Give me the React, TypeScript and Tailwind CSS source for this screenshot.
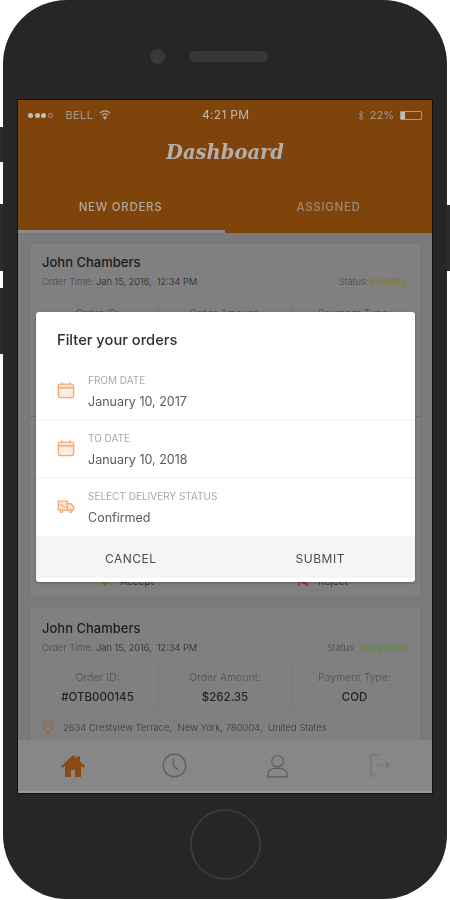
import React from "react";

const font = "[font-family:Inter,'Liberation_Sans',sans-serif]";

function Cal() {
  return (
    <svg width="18" height="18" viewBox="0 0 20 20" fill="none" stroke="#f5ab75" strokeWidth="1.500">
      <rect x="1.500" y="3.500" width="17" height="15" rx="2" fill="#fde6d3" />
      <path d="M1.500 7.500h17M5.500 1.500v3M14.500 1.500v3" />
      <path d="M5 10.500h10M5 13h10M5 15.500h10" stroke="#fff" strokeWidth="1.200" strokeDasharray="2 1.200" />
    </svg>
  );
}

function Truck() {
  return (
    <svg width="18" height="15" viewBox="0 0 20 16" fill="none" stroke="#f5ab75" strokeWidth="1.600">
      <path d="M1.500 2h10v10h-10z" fill="#fde6d3" />
      <path d="M11.500 5h4l3 3.500V12h-7z" fill="#fde6d3" />
      <circle cx="5" cy="13" r="1.600" fill="#fff" />
      <circle cx="15" cy="13" r="1.600" fill="#fff" />
      <path d="M3 5l6 4" />
    </svg>
  );
}

function Stat({ label, value, className }: { label: string; value?: string; className: string }) {
  return (
    <div className={`flex flex-col items-center gap-[6px] pt-2 pb-[6px] ${className}`}>
      <span className="text-[10.500px] leading-[13px] font-light text-[#505050]">{label}</span>
      {value && <span className="text-[11.500px] leading-[14px] font-medium text-[#222]">{value}</span>}
    </div>
  );
}

function CardHead({ status, color }: { status: string; color: string }) {
  return (
    <>
      <div className="text-[13px] leading-[16px] font-medium text-[#1c1c1c]">John Chambers</div>
      <div className="mt-[6px] flex items-center justify-between text-[9.300px] leading-[12px]">
        <span className="font-light text-[#484848]">
          Order Time: <span className="text-[#252525]">Jan 15, 2016,&nbsp; 12:34 PM</span>
        </span>
        <span className="font-light text-[#484848]">
          Status: <span className="font-normal" style={{ color }}>{status}</span>
        </span>
      </div>
    </>
  );
}

function Field({ icon, label, value, last }: { icon: React.ReactNode; label: string; value: string; last?: boolean }) {
  return (
    <div className={`flex items-center gap-[13px] pl-[21px] ${last ? "h-[57px]" : "h-[58px] border-b-2 border-[#f7f7f7]"}`}>
      <div className="-mt-[3px] flex w-[18px] justify-center">{icon}</div>
      <div className="flex flex-col gap-[9px]">
        <span className="text-[10px] leading-[12px] text-[#a8a8a8]">{label}</span>
        <span className="text-[12.500px] leading-[14px] text-[#5a5a5a]">{value}</span>
      </div>
    </div>
  );
}

export default function App() {
  return (
    <div className={`relative h-[900px] w-[450px] overflow-hidden bg-white ${font}`}>
      <div className="h-full w-full blur-[0.5px]">
        {/* side buttons */}
        <div className="absolute top-[127px] left-0 h-[35px] w-[4px] bg-[#2b2b2b]" />
        <div className="absolute top-[204px] left-0 h-[67px] w-[4px] bg-[#2b2b2b]" />
        <div className="absolute top-[288px] left-0 h-[66px] w-[4px] bg-[#2b2b2b]" />
        <div className="absolute top-[205px] right-0 h-[66px] w-[4px] bg-[#2b2b2b]" />

        <div className="relative mx-[3px] flex h-[899px] w-[444px] flex-col items-center rounded-[64px] bg-[#262626]">
          {/* top bezel */}
          <div className="flex h-[100px] shrink-0 items-center gap-[24px] pt-[12px] pr-[32px]">
            <div className="h-[15px] w-[15px] rounded-full bg-[#383838]" />
            <div className="h-[11px] w-[79px] rounded-full bg-[#383838]" />
          </div>

          {/* screen */}
          <div className="relative flex h-[693px] w-[414px] shrink-0 flex-col overflow-hidden bg-[#7a7a7a] shadow-[0_0_0_1px_#111]">
            <div className="flex h-[133px] shrink-0 flex-col bg-[#7f430c]">
              <div className="flex h-[30px] shrink-0 items-center justify-between px-[10px] text-[11px] text-[#a39a90]">
                <div className="flex items-center gap-[13px]">
                  <div className="flex items-center gap-[1.500px]">
                    <i className="h-[5px] w-[5px] rounded-full bg-[#c4bdb6]" />
                    <i className="h-[5px] w-[5px] rounded-full bg-[#c4bdb6]" />
                    <i className="h-[5px] w-[5px] rounded-full bg-[#c4bdb6]" />
                    <i className="h-[5px] w-[5px] rounded-full border border-[#a39a90]" />
                  </div>
                  <div className="flex items-center gap-[6px]">
                    <span className="tracking-[0.400px]">BELL</span>
                    <svg width="12" height="10" viewBox="0 0 12 10" fill="none" stroke="#b5aca3" strokeWidth="1.200">
                      <path d="M1 3c3-2.600 7-2.600 10 0M3 5.200c1.800-1.500 4.200-1.500 6 0M6 9 4.700 7.300c.8-.6 1.800-.6 2.600 0z" />
                    </svg>
                  </div>
                </div>
                <span className="absolute left-[184px] text-[12px] tracking-[0.300px] text-[#c0b8b0]">4:21 PM</span>
                <div className="flex items-center gap-[6px]">
                  <svg width="6" height="11" viewBox="0 0 6 11" fill="none" stroke="#9c8e80" strokeWidth="0.900">
                    <path d="M1 3l4 4.500L3 10V1l2 2.500L1 8" />
                  </svg>
                  <span>22%</span>
                  <div className="h-[9px] w-[22px] rounded-[1px] border border-[#a39a90]">
                    <div className="h-full w-[4px] bg-[#c4bdb6]" />
                  </div>
                </div>
              </div>
              <div className="mt-[5px] flex h-[36px] shrink-0 items-center justify-center">
                <span className="[font-family:'DejaVu_Serif',serif] text-[19.500px] leading-[28px] font-bold text-[#b5afaa] italic">
                  Dashboard
                </span>
              </div>
              <div className="mt-auto flex h-[62px] text-[11.500px] tracking-[0.700px]">
                <div className="flex flex-1 items-center justify-center border-b-[3px] border-[#8a8a8a] pt-[14px] font-medium text-[#b3a79c]">
                  <span className="mr-[2px]">NEW ORDERS</span>
                </div>
                <div className="flex flex-1 items-center justify-center border-b-[3px] border-transparent pt-[14px] font-medium text-[#a08a74]">
                  ASSIGNED
                </div>
              </div>
            </div>

            <div className="flex min-h-0 flex-1 flex-col gap-[8px] overflow-hidden px-[11px] pt-[10px]">
              <div className="flex h-[355px] shrink-0 flex-col rounded-[2px] border border-[#767676] bg-[#808080]">
                <div className="flex h-[173px] shrink-0 flex-col border-b border-[#6e6e6e] pt-[10px] pr-[13px] pl-[12px]">
                  <CardHead status="Pending" color="#857a28" />
                  <div className="-mr-[10px] -ml-[5px] mt-[11px] flex">
                    <Stat label="Order ID:" className="w-[121px]" />
                    <Stat label="Order Amount:" className="w-[134px] border-x border-[#7a7a7a]" />
                    <Stat label="Payment Type:" className="flex-1" />
                  </div>
                </div>
                <div className="mt-auto flex pb-[10px] text-[10px] leading-[12px] text-[#333]">
                  <div className="flex flex-1 items-center justify-center gap-[9px]">
                    <svg width="10" height="12" viewBox="0 0 10 12" fill="none" stroke="#6f6a1c" strokeWidth="1.500">
                      <path d="M1 7l3 3 5-7" />
                    </svg>
                    <span>Accept</span>
                  </div>
                  <div className="flex flex-1 items-center justify-center gap-[9px]">
                    <svg width="12" height="12" viewBox="0 0 12 12" fill="none" stroke="#8a3a2e" strokeWidth="1.500">
                      <path d="M1 11 6 2l5 9M2 5l8 5" />
                    </svg>
                    <span>Reject</span>
                  </div>
                </div>
              </div>
              <div className="flex shrink-0 flex-col rounded-[2px] border border-[#767676] bg-[#808080] pt-[13px] pr-[13px] pl-[12px]">
                <CardHead status="Completed" color="#64883c" />
                <div className="-mr-[10px] -ml-[5px] mt-[9px] flex border-b border-[#7a7a7a]">
                  <Stat label="Order ID:" value="#OTB000145" className="w-[121px]" />
                  <Stat label="Order Amount:" value="$262.35" className="w-[134px] border-x border-[#7a7a7a]" />
                  <Stat label="Payment Type:" value="COD" className="flex-1" />
                </div>
                <div className="mt-[8px] flex items-center gap-[9px] pb-[10px]">
                  <svg width="12" height="17" viewBox="0 0 14 17" fill="none" stroke="#97653f" strokeWidth="1.200" className="shrink-0">
                    <path d="M7 16C4 11.500 1.500 9 1.500 6a5.500 5.500 0 0 1 11 0c0 3-2.500 5.500-5.500 10z" />
                    <circle cx="7" cy="6" r="2" />
                  </svg>
                  <span className="text-[9.500px] leading-[12px] font-light text-[#383838]">
                    2634 Crestview Terrace,&nbsp; New York, 780004,&nbsp; United States
                  </span>
                </div>
              </div>
            </div>

            <div className="flex h-[53px] shrink-0 items-center border-b-[2px] border-[#9a9a9a] bg-[#878787] pl-[42px]">
              <svg width="26" height="24" viewBox="0 0 26 24" fill="#8a4a10" className="mr-[76px] shrink-0">
                <path d="M13 1 1 12.500l1.500 1.500L5 11.700V23h6v-7h4v7h6V11.700l2.500 2.300 1.500-1.500L20 7.300V2.500h-3v2z" />
              </svg>
              <svg width="25" height="25" viewBox="0 0 26 26" fill="none" stroke="#5e5e5e" strokeWidth="1.400" className="mr-[80px] shrink-0">
                <circle cx="13" cy="13" r="11.700" />
                <path d="M12 6v7.500l5 4" />
              </svg>
              <svg width="21" height="24" viewBox="0 0 22 25" fill="none" stroke="#5e5e5e" strokeWidth="1.300" className="mr-[82px] shrink-0">
                <circle cx="11" cy="7.500" r="6" />
                <path d="M1 24v-3.500c0-3 3-4.500 6-5.500h8c3 1 6 2.500 6 5.500V24z" />
              </svg>
              <svg width="20" height="25" viewBox="0 0 22 25" fill="none" stroke="#737373" strokeWidth="1.200" className="shrink-0">
                <path d="M10 1H3a2 2 0 0 0-2 2v19a2 2 0 0 0 2 2h7M8 12h13M17 8l4 4-4 4" />
              </svg>
            </div>

            {/* filter dialog */}
            <div className="absolute top-[212px] left-[18px] flex h-[270px] w-[379px] flex-col overflow-hidden rounded-[3px] bg-white pb-[4px] shadow-[0_1px_3px_rgba(0,0,0,0.3)]">
              <div className="flex h-[51px] shrink-0 items-center pt-[5px] pl-[21px] text-[14.700px] font-medium text-[#2e2e2e]">
                Filter your orders
              </div>
              <Field icon={<Cal />} label="FROM DATE" value="January 10, 2017" />
              <Field icon={<Cal />} label="TO DATE" value="January 10, 2018" />
              <Field icon={<Truck />} label="SELECT DELIVERY STATUS" value="Confirmed" last />
              <div className="flex flex-1 items-center bg-[#f5f5f5] pt-[4px] text-[12px] tracking-[0.500px] text-[#4a4a4a]">
                <div className="flex flex-1 justify-center">CANCEL</div>
                <div className="flex flex-1 justify-center">SUBMIT</div>
              </div>
            </div>
          </div>

          {/* home button */}
          <div className="mt-[16px] h-[71px] w-[71px] rounded-full border-[2px] border-[#3a3a3a]" />
        </div>
      </div>
    </div>
  );
}
